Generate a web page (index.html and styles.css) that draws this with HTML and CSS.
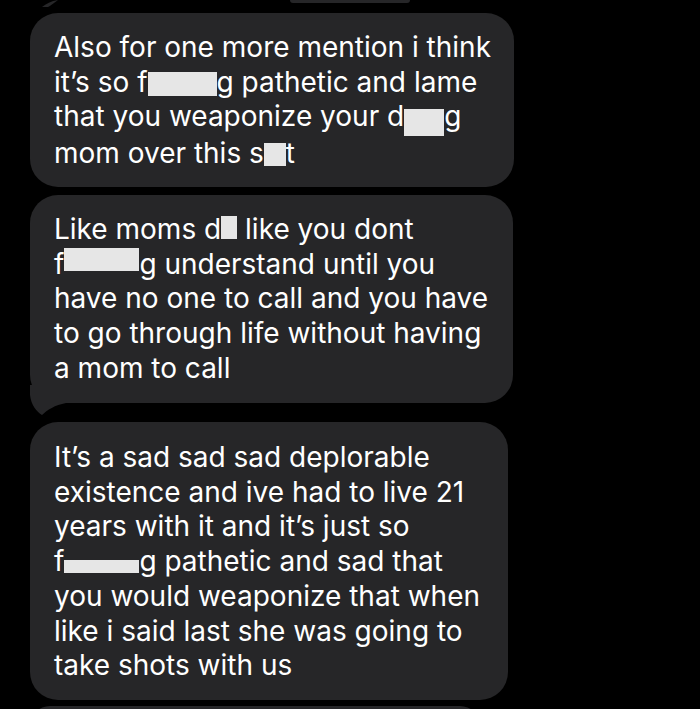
FILE: index.html
```html
<!DOCTYPE html>
<html>
<head>
<meta charset="utf-8">
<link rel="stylesheet" href="styles.css">
</head>
<body>
<div class="thread">
  <div class="prev-row">
    <svg class="prev-tail" width="16" height="7" viewBox="0 0 16 7"><path d="M0,7 C4,4 9,1 16,0 L16,0 C12,3 8,6 6,7 Z" fill="#262628"/></svg>
    <div class="prev-strip"></div>
  </div>
  <div class="bubble b1">Also for one more mention i think<br>it’s so f<span class="redact r1"></span>g pathetic and lame<br>that you weaponize your d<span class="redact r2"></span>g<br>mom over this s<span class="redact r3"></span>t</div>
  <div class="bubble b2 tail">Like moms d<span class="redact r4"></span> like you dont<br>f<span class="redact r5"></span>g understand until you<br>have no one to call and you have<br>to go through life without having<br>a mom to call<svg class="tail-svg" width="40" height="32" viewBox="0 0 40 32"><path d="M0,0 L0,10 C1,20 7,27 12,30 C17,25 25,20 36,18 L36,0 Z" fill="#262628"/></svg></div>
  <div class="bubble b3">It’s a sad sad sad deplorable<br>existence and ive had to live 21<br>years with it and it’s just so<br>f<span class="redact r6"></span>g pathetic and sad that<br>you would weaponize that when<br>like i said last she was going to<br>take shots with us</div>
  <div class="next"></div>
</div>
</body>
</html>
```

FILE: styles.css
```css
html, body {
  margin: 0;
  padding: 0;
  background: #000;
}
body {
  width: 700px;
  height: 709px;
  overflow: hidden;
}
.thread {
  display: flex;
  flex-direction: column;
  align-items: flex-start;
  padding-left: 30px;
}
.prev-row {
  display: flex;
  align-items: flex-start;
  height: 13px;
}
.prev-tail {
  margin-left: 12px;
}
.prev-strip {
  margin-left: 232px;
  width: 120px;
  height: 3px;
  background: #262628;
  border-radius: 0 0 30px 30px;
}
.bubble {
  position: relative;
  background: #262628;
  color: #fff;
  font-family: "Inter", "Liberation Sans", sans-serif;
  font-size: 28px;
  line-height: 34.7px;
  border-radius: 28px;
  box-sizing: border-box;
  padding: 17px 20px 17px 24px;
  white-space: nowrap;
}
.b1 { width: 484px; height: 174px; }
.b2 { width: 483px; height: 208px; margin-top: 8px; }
.b3 { width: 478px; height: 278px; margin-top: 19px; padding-top: 18px; }
.tail-svg {
  position: absolute;
  left: 0;
  bottom: -14px;
}
.redact {
  display: inline-block;
  vertical-align: top;
  background: #e6e6e6;
}
.r1 { width: 69px; height: 24px; margin-top: 7.5px; }
.r2 { width: 40px; height: 27px; margin-top: 9.5px; }
.r3 { width: 22px; height: 23px; margin-top: 7.5px; }
.r4 { width: 16px; height: 23px; margin-top: 3.5px; }
.r5 { width: 75px; height: 23px; margin-top: 1.5px; }
.r6 { width: 75px; height: 13px; margin-top: 15.5px; }
.next {
  margin-top: 6px;
  width: 450px;
  height: 20px;
  background: #262628;
  border-radius: 28px 28px 0 0;
}
```
